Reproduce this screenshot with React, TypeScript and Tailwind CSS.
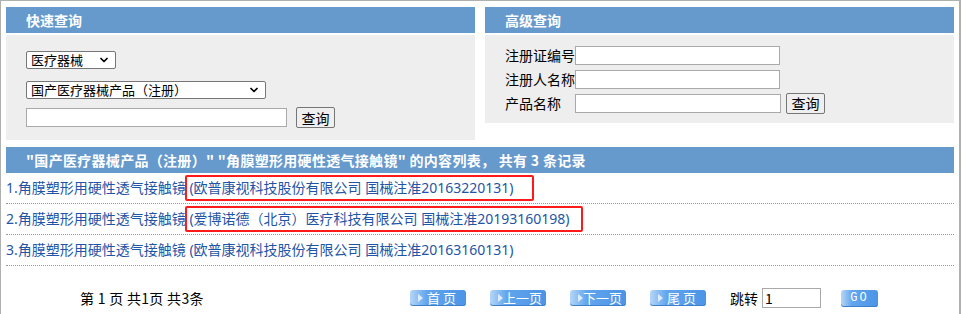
import React from "react";
import { ChevronDown } from "lucide-react";

const font = { fontFamily: '"Microsoft YaHei", "Noto Sans CJK SC", sans-serif' };
const rowFont = { fontFamily: '"Noto Sans", "Noto Sans CJK SC", sans-serif' };

const rows = [
    { no: 1, name: "角膜塑形用硬性透气接触镜", extra: "(欧普康视科技股份有限公司 国械注准20163220131)", box: "w-[349px]" },
    { no: 2, name: "角膜塑形用硬性透气接触镜", extra: "(爱博诺德（北京）医疗科技有限公司 国械注准20193160198)", box: "w-[398px]" },
    { no: 3, name: "角膜塑形用硬性透气接触镜", extra: "(欧普康视科技股份有限公司 国械注准20163160131)", box: "" },
];

function PanelHead({ title }: { title: string }) {
    return (
        <div className="h-[26px] bg-[#6699cc] flex items-center pl-[20px] text-white font-bold text-[14px] leading-[20px]">
            {title}
        </div>
    );
}

function FakeSelect({ width, label }: { width: string; label: string }) {
    return (
        <div className={`relative h-[18px] ${width} border border-[#767676] rounded-[2px] bg-white flex items-center pl-[4px] text-[13px] leading-[16px] text-black`}>
            <span>{label}</span>
            <ChevronDown size={12} strokeWidth={3.5} className="absolute right-[5px] top-[2px] text-black" />
        </div>
    );
}

function GrayButton({ text }: { text: string }) {
    return (
        <button className="h-[21px] w-[39px] border border-[#767676] rounded-[2px] bg-[#efefef] text-[14px] leading-[18px] text-black">
            {text}
        </button>
    );
}

function PageButton({ text }: { text: string }) {
    return (
        <div className="relative w-[56px] h-[16px] rounded-[3px] bg-[linear-gradient(to_right,#b5d6f7,#62a5ee_30%,#4b94e6)] flex items-center shadow-[inset_0_-1px_0_#3a7fd0]">
            <div className="ml-[8px] w-0 h-0 border-y-[4px] border-y-transparent border-l-[5px] border-l-[#dcecff]" />
            <span className="flex-1 text-center pr-[6px] text-white text-[13px] leading-[16px] whitespace-pre">{text}</span>
        </div>
    );
}

export default function App() {
    return (
        <div style={font} className="w-[961px] h-[314px] bg-white border-l border-t border-r-2 border-[#b0b0b0] pt-[6px] pl-[5px] pr-[5px] overflow-hidden">
            <div className="flex gap-[10px] items-start">
                <div className="w-[469px]">
                    <PanelHead title="快速查询" />
                    <div className="mt-[2px] h-[105px] bg-[#eeeeee] pl-[20px] pt-[16px]">
                        <FakeSelect width="w-[90px]" label="医疗器械" />
                        <div className="mt-[12px]">
                            <FakeSelect width="w-[240px]" label="国产医疗器械产品（注册）" />
                        </div>
                        <div className="mt-[8px] flex items-center gap-[9px]">
                            <input className="w-[261px] h-[19px] border border-[#a9a9a9] bg-white outline-none" />
                            <GrayButton text="查询" />
                        </div>
                    </div>
                </div>
                <div className="w-[469px]">
                    <PanelHead title="高级查询" />
                    <div className="mt-[2px] h-[88px] bg-[#eeeeee] pl-[20px] pt-[11px] text-[14px] text-black">
                        <div className="flex items-center h-[19px]">
                            <span className="w-[70px] leading-[19px]">注册证编号</span>
                            <input className="w-[205px] h-[19px] border border-[#a9a9a9] bg-white outline-none" />
                        </div>
                        <div className="flex items-center h-[19px] mt-[5px]">
                            <span className="w-[70px] leading-[19px]">注册人名称</span>
                            <input className="w-[205px] h-[19px] border border-[#a9a9a9] bg-white outline-none" />
                        </div>
                        <div className="flex items-center h-[21px] mt-[4px]">
                            <span className="w-[70px] leading-[19px]">产品名称</span>
                            <input className="w-[206px] h-[19px] border border-[#a9a9a9] bg-white outline-none" />
                            <div className="ml-[5px]">
                                <GrayButton text="查询" />
                            </div>
                        </div>
                    </div>
                </div>
            </div>

            <div className="mt-[7px] h-[26px] bg-[#6699cc] flex items-center pl-[20px] text-white font-bold text-[14px] leading-[20px] whitespace-pre tracking-[0.3px]">
                "国产医疗器械产品（注册）" "角膜塑形用硬性透气接触镜" 的内容列表， 共有 3 条记录
            </div>

            <div style={rowFont}>
                {rows.map((r) => (
                    <div key={r.no} className="h-[31px] border-b border-dotted border-[#999999] flex items-center text-[14px] leading-[20px] text-[#1f55a6] whitespace-pre">
                        <span>{r.no}.{r.name}</span>
                        <span className="relative">
                            {" " + r.extra}
                            {r.box && (
                                <span className={`absolute -left-[1px] -top-[3px] -bottom-[3px] ${r.box} border-2 border-[#ff1a1a] rounded-[2px]`} />
                            )}
                        </span>
                    </div>
                ))}
            </div>

            <div className="flex items-center pt-[22px] text-[14px] text-black">
                <div className="w-[404px] pl-[74px] leading-[20px] whitespace-pre tracking-[0.3px]">第 1 页 共1页 共3条</div>
                <div className="flex items-center gap-[24px]">
                    <PageButton text="首 页" />
                    <PageButton text="上一页" />
                    <PageButton text="下一页" />
                    <PageButton text="尾 页" />
                </div>
                <span className="ml-[24px] leading-[20px]">跳转</span>
                <input defaultValue="1" className="ml-[4px] w-[59px] h-[20px] border border-[#a9a9a9] bg-white pl-[2px] text-[14px] leading-[18px] outline-none" />
                <div className="ml-[20px] w-[37px] h-[17px] rounded-[3px] bg-[linear-gradient(to_right,#b5d6f7,#62a5ee_30%,#4b94e6)] shadow-[inset_0_-1px_0_#3a7fd0] flex items-center justify-center text-white text-[12px] leading-[16px] tracking-[2px] font-[Liberation_Mono,monospace]">
                    GO
                </div>
            </div>
        </div>
    );
}
